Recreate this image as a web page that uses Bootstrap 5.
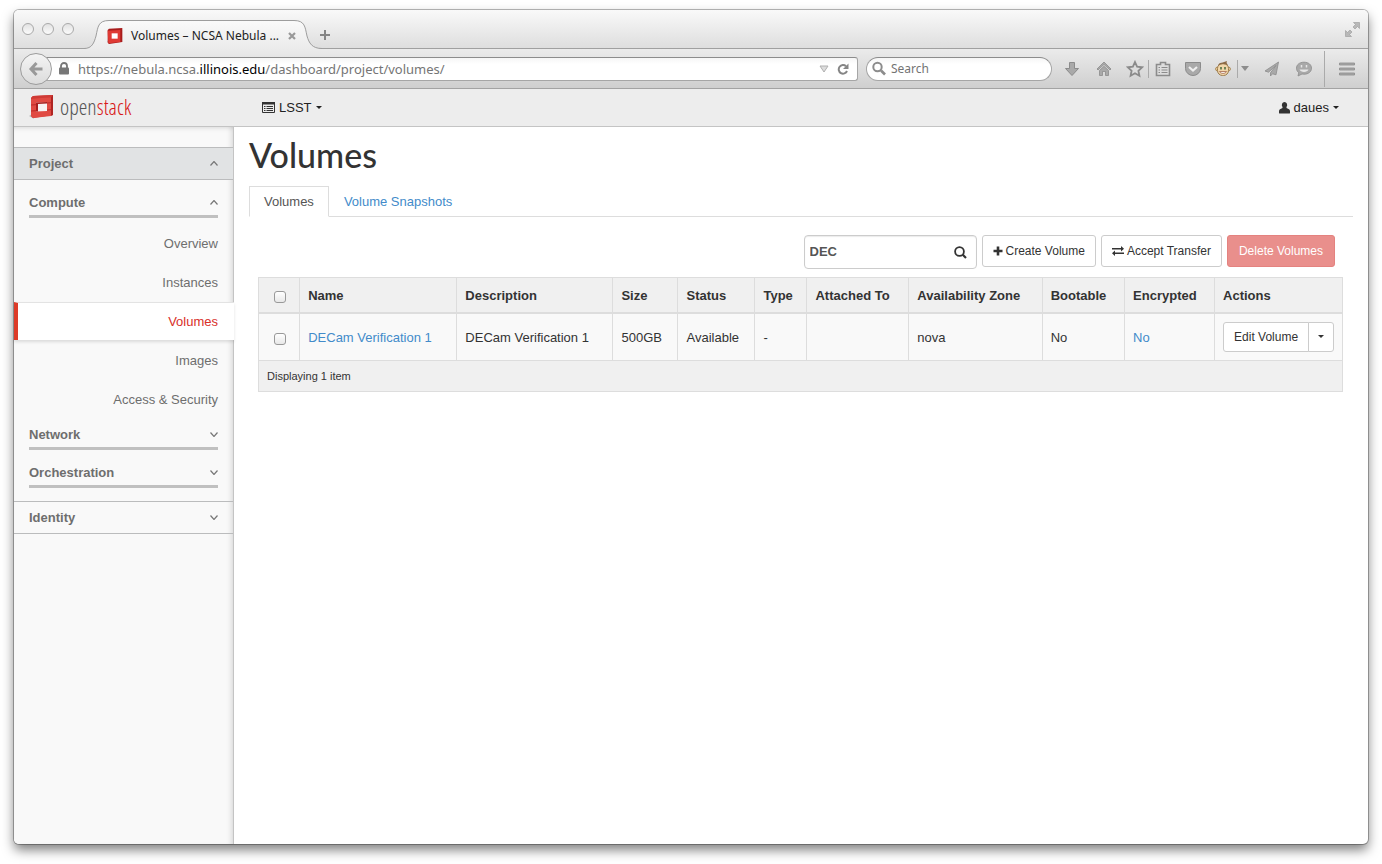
<!DOCTYPE html>
<html lang="en">
<head>
<meta charset="utf-8">
<meta name="viewport" content="width=device-width, initial-scale=1">
<title>Volumes – NCSA Nebula</title>
<link rel="stylesheet" href="https://cdn.jsdelivr.net/npm/bootstrap@5.3.0/dist/css/bootstrap.min.css">
<style>
  body { font-family: "Liberation Sans", Arial, sans-serif; font-size: 13px; line-height: 20px; color: #333; background: #fff; }
  a { text-decoration: none; color: #428bca; }
  button { font-family: inherit; }
  svg { display: block; flex: none; }
  .desk { min-height: 100vh; padding: 10px 14px 20px; overflow: hidden; }
  .win { min-width: 0; border-radius: 5px; box-shadow: 0 0 0 1px rgba(0,0,0,.27), 0 6px 12px rgba(0,0,0,.5); background: #fff; }

  /* browser chrome */
  .chrome { font-family: "Noto Sans", "Open Sans", sans-serif; font-size: 12px; }
  .tabstrip { height: 39px; background: linear-gradient(#f9f9f9, #dedede); border-bottom: 1px solid #a0a0a0; border-radius: 5px 5px 0 0; padding: 0 8px; }
  .lights { gap: 8px; padding-top: 13px; width: 62px; }
  .lights button { width: 12px; height: 12px; border: 1px solid #a9a9a9; border-radius: 50%; background: linear-gradient(#e2e2e2, #fbfbfb); padding: 0; }
  .tab { position: relative; width: 240px; height: 39px; margin-right: -5px; padding: 12px 28px 0 23px; color: #222; }
  .tab > svg { position: absolute; left: 0; top: 0; }
  .tab > .tabrow { position: relative; }
  .plain { border: 0; background: none; padding: 0; color: inherit; }
  .toolbar { height: 40px; background: linear-gradient(#ebebeb, #cfcfcf); border-bottom: 1px solid #a3a3a3; padding: 0 7px 0 6px; }
  .back { width: 32px; height: 32px; border: 1px solid #9c9c9c; border-radius: 50%; background: linear-gradient(#f4f4f4, #dcdcdc); padding: 0; position: relative; z-index: 1; }
  .urlbar { height: 24px; margin-left: -6px; border: 1px solid #a6a6a6; border-top-color: #8c8c8c; border-radius: 0 3px 3px 0; background: linear-gradient(#f6f6f6, #fff 6px); padding: 0 8px 0 11px; color: #757575; font-size: 13px; }
  .urlbar b { font-weight: 400; color: #000; }
  .findbar { width: 186px; height: 24px; margin-left: 8px; border: 1px solid #a6a6a6; border-top-color: #8c8c8c; border-radius: 12px; background: linear-gradient(#f6f6f6, #fff 6px); padding: 0 6px 0 4px; }
  .findbar input { border: 0; outline: 0; background: none; min-width: 0; padding: 0; }
  .findbar input::placeholder { color: #737373; opacity: 1; }
  .tools { color: #8f8f8f; padding-left: 4px; }
  .tools .plain { width: 32px; height: 32px; }
  .tools .slim { width: 28px; }
  .tools .slimmer { width: 24px; }
  .tools .tiny { width: 14px; }
  .rule { width: 1px; height: 18px; background: #aaa; }
  .rule-tall { height: 36px; }
  .tools svg { fill: #a9a9a9; stroke: #8b8b8b; }

  /* site header */
  .topbar { height: 38px; background: #ededed; border-bottom: 1px solid #c4c4c4; padding: 0 29px 0 15px; color: #222; }
  .logo { width: 233px; gap: 6px; padding-bottom: 2px; }
  .wordmark { font-family: "Open Sans Condensed Light", "Liberation Sans Narrow", "Carlito", "Lato", sans-serif; font-size: 22px; line-height: 24px; padding-bottom: 2px; color: #555; }
  .wordmark span { color: #d81818; }
  .topbar .plain { gap: 4px; }
  .caret { width: 0; height: 0; border: 3px solid transparent; border-top: 3px solid; border-bottom: 0; }

  /* sidebar */
  .side { width: 220px; background: #f9f9f9; border-right: 1px solid #c4c4c4; box-shadow: inset -5px 0 5px -3px rgba(0,0,0,.12), inset 0 5px 5px -4px rgba(0,0,0,.12); padding-top: 20px; border-radius: 0 0 0 5px; color: #6e6e6e; flex: none; }
  .panel-head { height: 33px; border-top: 1px solid #bbbcbd; border-bottom: 1px solid #bbbcbd; padding: 0 15px; font-weight: 700; }
  .panel-head.open { background: #e1e3e4; }
  .group-head + .panel-head { margin-top: 13px; }
  .group-head { margin: 7px 15px 0; height: 31px; border-bottom: 3px solid #c0c0c0; padding-top: 3px; font-weight: 700; }
  .group-head, .panel-head { color: #6e6e6e; }
  .side svg { fill: none; stroke: #777; stroke-width: 1.2; }
  .menu { margin-top: 6px; }
  .menu a { display: block; height: 39px; padding: 10px 15px 0 0; text-align: right; color: #6e6e6e; }
  .menu a.current { background: #fff; color: #d9302a; border-left: 4px solid #dd3b28; border-top: 1px solid #e3e3e3; box-shadow: 0 2px 3px rgba(0,0,0,.12); margin-right: -1px; padding: 9px 16px 0 0; height: 38px; margin-bottom: 1px; }

  /* page */
  .page { padding: 9px 15px; min-width: 0; }
  h1 { font-family: "Lato", sans-serif; font-size: 34px; line-height: 38px; color: #333; margin: 0 0 12px; }
  .nav-tabs { border-color: #ddd; }
  .nav-tabs .nav-link { padding: 5px 14px; height: 31px; color: #428bca; border-radius: 0; }
  .nav-tabs .nav-link.active { color: #555; border-color: #ddd #ddd #fff; }
  .actions { gap: 5px; padding: 18px 8px 8px 0; font-size: 12px; }
  .filter { width: 173px; height: 34px; border: 1px solid #ccc; border-radius: 4px; box-shadow: inset 0 1px 1px rgba(0,0,0,.08); padding: 0 9px 0 5px; }
  .filter input { border: 0; outline: 0; padding: 0; min-width: 0; font-size: 13px; font-weight: 700; color: #555; }
  .btn { --bs-btn-font-size: 12px; --bs-btn-border-radius: 3px; --bs-btn-line-height: 18px; --bs-btn-border-color: #ccc; --bs-btn-bg: #fff; --bs-btn-color: #333; --bs-btn-padding-x: 10px; --bs-btn-padding-y: 5px; }
  .actions .btn { height: 32px; gap: 3px; }
  .actions .btn-danger { --bs-btn-padding-x: 11px; --bs-btn-disabled-bg: #e98f8c; --bs-btn-disabled-border-color: #e4827f; --bs-btn-disabled-color: #fff; --bs-btn-disabled-opacity: 1; }
  .grid-wrap { padding: 0 10px 0 9px; }
  .vols { table-layout: fixed; margin: 0; border: 1px solid #ddd; --bs-table-color: #333; color: #333; }
  .vols th, .vols td { border: 1px solid #ddd; padding: 8px; vertical-align: middle; white-space: nowrap; }
  .vols thead th { height: 35px; padding: 8px 8px 5px; background: #f0f0f0; border-bottom: 2px solid #ddd; }
  .vols tbody td { height: 47px; padding-top: 10px; background: #f9f9f9; }
  .vols tbody td:last-child { padding-top: 8px; }
  .vols tfoot td { height: 31px; padding: 5px 8px; background: #f0f0f0; font-size: 11px; }
  .tick { appearance: none; width: 12px; height: 12px; border: 1px solid #999; border-radius: 3px; background: linear-gradient(#fff, #e8e8e8); display: block; margin: 2px 0 0 7px; }
  .vols .btn { height: 30px; }
  .vols .btn + .btn { --bs-btn-padding-x: 9px; }
</style>
</head>
<body>
<div class="desk d-flex">
<div class="win d-flex flex-column flex-grow-1">
  <header class="chrome">
    <div class="tabstrip d-flex">
      <div class="lights d-flex"><button aria-label="Close"></button><button aria-label="Minimize"></button><button aria-label="Zoom"></button></div>
      <div class="tab">
        <svg width="240" height="39" viewBox="0 0 240 39"><defs><linearGradient id="tg" x2="0" y2="1"><stop stop-color="#fafafa"/><stop offset="1" stop-color="#ebebeb"/></linearGradient></defs><path d="M0 38.500C8 38.500 10 33 12 26C14 17 14 10.500 25 10.500H210C221 10.500 221 17 223 26C225 33 228 38.500 238 38.500V39H0Z" fill="url(#tg)"/><path d="M0 38.500C8 38.500 10 33 12 26C14 17 14 10.500 25 10.500H210C221 10.500 221 17 223 26C225 33 228 38.500 238 38.500" fill="none" stroke="#9d9d9d"/></svg>
        <div class="tabrow d-flex align-items-center h-100">
          <svg width="16" height="16" viewBox="0 0 24 24"><path d="m0 20 2-1 2 4Z" fill="#bbb"/><path d="M1 3 3 1 23 0v21L3 24l-2-2Z" fill="#a81c1c"/><path d="M1 4 20 3v18L2 23Z" fill="#df3a34"/><path d="M7 8h9v8H7Z" fill="#fff"/></svg>
          <span class="flex-grow-1 text-nowrap ms-2">Volumes – NCSA Nebula ...</span>
          <button class="plain" aria-label="Close tab"><svg width="8" height="8" viewBox="0 0 8 8"><path d="m1 1 6 6M7 1 1 7" stroke="#999" stroke-width="2.200"/></svg></button>
        </div>
      </div>
      <button class="plain pt-3 pb-1" aria-label="New tab"><svg width="12" height="12" viewBox="0 0 12 12"><path d="M6 1v10M1 6h10" stroke="#858585" stroke-width="2"/></svg></button>
      <button class="plain ms-auto" aria-label="Full screen"><svg width="15" height="15" viewBox="0 0 15 15"><path d="M8.500.5h6v6l-2-2-2.500 2.500L8 5l2.500-2.500ZM6.500 14.500h-6v-6l2 2L5 8l2 2-2.500 2.500Z" fill="#b8b8b8" stroke="#989898" stroke-width=".6"/></svg></button>
    </div>
    <div class="toolbar d-flex align-items-center">
      <button class="back d-flex align-items-center justify-content-center" aria-label="Back"><svg width="16" height="16" viewBox="0 0 16 16"><path d="M8.500 2 3 8l5.500 6M3 8h11.500" fill="none" stroke="#999" stroke-width="3"/></svg></button>
      <div class="urlbar d-flex align-items-center flex-grow-1">
        <svg width="12" height="13" viewBox="0 0 12 13"><path d="M3 6V4a3 3 0 0 1 6 0v2" fill="none" stroke="#777" stroke-width="1.800"/><rect x="1" y="5.500" width="10" height="7" rx="1" fill="#777"/></svg>
        <span class="flex-grow-1 ms-2 text-nowrap">https://nebula.ncsa.<b>illinois.edu</b>/dashboard/project/volumes/</span>
        <svg width="10" height="8" viewBox="0 0 10 8"><path d="M1 1h8L5 7Z" fill="#ddd" stroke="#b0b0b0"/></svg>
        <button class="plain ms-2" aria-label="Reload"><svg width="12" height="12" viewBox="0 0 12 12"><path d="M9 3.200A4.300 4.300 0 1 0 10 8" fill="none" stroke="#858585" stroke-width="2"/><path d="M11.500.5V6H6Z" fill="#858585"/></svg></button>
      </div>
      <div class="findbar d-flex align-items-center">
        <svg width="16" height="16" viewBox="0 0 16 16"><circle cx="6.500" cy="6" r="4.200" fill="none" stroke="#8c8c8c" stroke-width="2"/><path d="m10 9.500 4 4" stroke="#8c8c8c" stroke-width="2.600"/></svg>
        <input class="flex-grow-1 ms-1" type="text" placeholder="Search" aria-label="Search">
      </div>
      <div class="tools d-flex align-items-center">
        <button class="plain d-flex align-items-center justify-content-center" aria-label="Downloads"><svg width="16" height="16" viewBox="0 0 16 16"><path d="M5.500 1.500h5v6h4L8 14.500 1.500 7.500h4Z"/></svg></button>
        <button class="plain d-flex align-items-center justify-content-center" aria-label="Home"><svg width="16" height="16" viewBox="0 0 16 16"><path d="M8 1 1 8l1 1 6-5.500L14 9l1-1Z M3.500 9.500 8 5.300l4.500 4.200v5h-3v-4h-3v4h-3Z" stroke-width=".8"/></svg></button>
        <button class="plain slimmer d-flex align-items-center justify-content-end" aria-label="Bookmark this page"><svg width="18" height="18" viewBox="0 0 18 18"><path d="m9 2 2.100 4.700 5 .6-3.700 3.500 1 5L9 13.200l-4.400 2.600 1-5L1.900 7.300l5-.6Z" style="fill:#ddd;stroke-width:1.800"/></svg></button>
        <span class="rule ms-1"></span>
        <button class="plain slim d-flex align-items-center justify-content-center" aria-label="Bookmarks"><svg width="16" height="16" viewBox="0 0 16 16"><path d="M1.500 3.500h4V1.500h5v2h4v11h-13Z" style="fill:#ddd;stroke-width:1.600"/><path d="M3.500 6.500H5M6.500 6.500h6M3.500 9H5M6.500 9h6M3.500 11.500H5M6.500 11.500h6" stroke-width="1.200"/></svg></button>
        <button class="plain d-flex align-items-center justify-content-center" aria-label="Pocket"><svg width="18" height="16" viewBox="0 0 18 16"><path d="M1.500 1.500h15v6a7.500 7 0 0 1-15 0Z"/><path d="m5 6 4 3.500L13 6" style="fill:none;stroke:#eee;stroke-width:2.200"/></svg></button>
        <button class="plain slim d-flex align-items-center justify-content-center" aria-label="Scripts"><svg width="16" height="17" viewBox="0 0 16 17"><circle cx="2.500" cy="9" r="1.900" style="fill:#f0d4a2;stroke:#a88755"/><circle cx="13.500" cy="9" r="1.900" style="fill:#f0d4a2;stroke:#a88755"/><rect x="2.500" y="3.500" width="11" height="12" rx="5" style="fill:#f1d7aa;stroke:#9b7a4b"/><path d="M3 5.500C4 2 8 3 12 1c-1 2 0 2.500 1 4-3-1-7-1-10 .5Z" style="fill:#8d6b45;stroke:none"/><path d="M6 7v2.500M10 7v2.500" style="stroke:#456b3c;stroke-width:1.500"/><path d="M4.500 11.500h7c-1 2.500-6 2.500-7 0Z" style="fill:#fff;stroke:#a3664a;stroke-width:.8"/></svg></button>
        <span class="rule"></span>
        <button class="plain tiny me-1 d-flex align-items-center justify-content-center" aria-label="Scripts menu"><svg width="8" height="5" viewBox="0 0 8 5"><path d="M0 0h8L4 5Z" style="fill:#8d8d8d;stroke:none"/></svg></button>
        <button class="plain d-flex align-items-center justify-content-center" aria-label="Send"><svg width="16" height="16" viewBox="0 0 16 16"><path d="M14.500 1 1 10l3.500 1.200L12 4.500l-5.500 7.300V15l2-2.200 3.500 1Z" stroke-width=".8"/></svg></button>
        <button class="plain d-flex align-items-center justify-content-center" aria-label="Chat"><svg width="18" height="16" viewBox="0 0 18 16"><path d="M9 1.200c4.500 0 7.500 2.500 7.500 6s-3 6-7.500 6l-2-.2-4 2 .8-3.300C2.300 10.600 1.500 9 1.500 7.200c0-3.500 3-6 7.500-6Z" stroke-width=".8"/><path d="M6.500 4v2.500M11.500 4v2.500" style="stroke:#e6e6e6;stroke-width:1.500"/><path d="M4.500 8.500h9c-1 3.200-8 3.200-9 0Z" style="fill:#e6e6e6;stroke:none"/></svg></button>
        <span class="rule rule-tall ms-1"></span>
        <button class="plain ms-2 slim d-flex align-items-center justify-content-center" aria-label="Menu"><svg width="16" height="14" viewBox="0 0 16 14"><path d="M.5 1h15v2H.5ZM.5 6h15v2H.5ZM.5 11h15v2H.5Z" stroke-width=".8"/></svg></button>
      </div>
    </div>
  </header>

  <nav class="topbar d-flex align-items-center" aria-label="Site">
    <a class="logo d-flex align-items-center" href="#">
      <svg width="25" height="26" viewBox="0 0 25 26"><path d="m0 22 3-2 2 5Z" fill="#bbb"/><path d="m2 4 2-2 20-1v20L4 24l-2-2Z" fill="#c52a27"/><path d="M2 4 4 2l20-1-2 3Z" fill="#cf3b36"/><path d="M2 4.500 22 3.500V22L4 24l-2-2Z" fill="#e04a42"/><path d="M22 3.500 24 1v20l-2 1Z" fill="#b02523"/><path d="M7 8.500 18 8v9L7 17.500Z" fill="#f7f2f2"/><path d="M7 8.500 18 8v1.500L9 10v7.500H7Z" fill="#a81e1c"/><path d="m2 11 5-.3M2 17l5-.3M18 9l4-.3M18 16l4-.3" stroke="#bd2b28"/></svg>
      <span class="wordmark">open<span>stack</span></span>
    </a>
    <button class="plain d-flex align-items-center">
      <svg width="13" height="11" viewBox="0 0 13 11"><path d="M.5.500h12v10H.5Z" fill="none" stroke="#333"/><path d="M0 0h13v2.500H0Z" fill="#333"/><path d="M2 4.500h1.500M4.500 4.500h6.500M2 6.500h1.500M4.500 6.500h6.500M2 8.500h1.500M4.500 8.500h6.500" stroke="#333"/></svg>
      LSST <span class="caret"></span></button>
    <button class="plain d-flex align-items-center ms-auto">
      <svg width="11" height="12" viewBox="0 0 11 12"><path d="M5.500 0a2.700 3 0 0 1 2 5v1L10 7.300q1 .5 1 1.900V11q0 .5-1 .5H1q-1 0-1-.5V9.200q0-1.400 1-1.900L3.500 6V5a2.700 3 0 0 1 2-5Z" fill="#333"/></svg>
      daues <span class="caret"></span></button>
  </nav>

  <div class="d-flex flex-grow-1">
    <aside class="side">
      <a class="panel-head open d-flex align-items-center justify-content-between" href="#">Project <svg width="8" height="5" viewBox="0 0 8 5"><path d="m.5 4.500 3.500-4 3.500 4"/></svg></a>
      <a class="group-head d-flex align-items-center justify-content-between" href="#">Compute <svg width="8" height="5" viewBox="0 0 8 5"><path d="m.5 4.500 3.500-4 3.500 4"/></svg></a>
      <div class="menu">
        <a href="#">Overview</a>
        <a href="#">Instances</a>
        <a href="#" class="current" aria-current="page">Volumes</a>
        <a href="#">Images</a>
        <a href="#">Access &amp; Security</a>
      </div>
      <a class="group-head mt-0 d-flex align-items-center justify-content-between" href="#">Network <svg width="8" height="5" viewBox="0 0 8 5"><path d="m.5.500 3.500 4 3.500-4"/></svg></a>
      <a class="group-head d-flex align-items-center justify-content-between" href="#">Orchestration <svg width="8" height="5" viewBox="0 0 8 5"><path d="m.5.500 3.500 4 3.500-4"/></svg></a>
      <a class="panel-head d-flex align-items-center justify-content-between" href="#">Identity <svg width="8" height="5" viewBox="0 0 8 5"><path d="m.5.500 3.500 4 3.500-4"/></svg></a>
    </aside>

    <main class="page flex-grow-1">
      <h1>Volumes</h1>
      <ul class="nav nav-tabs">
        <li class="nav-item"><a class="nav-link active" href="#" aria-current="page">Volumes</a></li>
        <li class="nav-item"><a class="nav-link" href="#">Volume Snapshots</a></li>
      </ul>
      <div class="grid-wrap">
        <form class="actions d-flex justify-content-end">
          <div class="filter d-flex align-items-center">
            <input class="flex-grow-1" type="text" value="DEC" aria-label="Filter">
            <button class="plain" type="button" aria-label="Filter volumes"><svg width="13" height="13" viewBox="0 0 13 13"><circle cx="5.500" cy="5.500" r="4.400" fill="none" stroke="#333" stroke-width="1.800"/><path d="m8.800 8.800 3.200 3.200" stroke="#333" stroke-width="2.200"/></svg></button>
          </div>
          <button class="btn d-flex align-items-center" type="button"><svg width="10" height="10" viewBox="0 0 10 10"><path d="M5 .5v9M.5 5h9" stroke="#333" stroke-width="2.600"/></svg>Create Volume</button>
          <button class="btn d-flex align-items-center" type="button"><svg width="12" height="10" viewBox="0 0 12 10"><path d="M0 2h9V0l3 2.700-3 2.700V3.500H0ZM12 6.500H3V4.600L0 7.300 3 10V8h9Z" fill="#333"/></svg>Accept Transfer</button>
          <button class="btn btn-danger" type="button" disabled>Delete Volumes</button>
        </form>
        <table class="table vols">
          <colgroup><col style="width:3.8%"><col style="width:14.5%"><col style="width:14.4%"><col style="width:6%"><col style="width:7.1%"><col style="width:4.8%"><col style="width:9.4%"><col style="width:12.3%"><col style="width:7.6%"><col style="width:8.3%"><col style="width:11.8%"></colgroup>
          <thead><tr><th><input class="tick" type="checkbox" aria-label="Select all"></th><th>Name</th><th>Description</th><th>Size</th><th>Status</th><th>Type</th><th>Attached To</th><th>Availability Zone</th><th>Bootable</th><th>Encrypted</th><th>Actions</th></tr></thead>
          <tbody><tr><td><input class="tick" type="checkbox" aria-label="Select DECam Verification 1"></td><td><a href="#">DECam Verification 1</a></td><td>DECam Verification 1</td><td>500GB</td><td>Available</td><td>-</td><td></td><td>nova</td><td>No</td><td><a href="#">No</a></td>
            <td><div class="btn-group"><button class="btn" type="button">Edit Volume</button><button class="btn d-flex align-items-center" type="button" aria-label="More actions"><span class="caret"></span></button></div></td></tr></tbody>
          <tfoot><tr><td colspan="11">Displaying 1 item</td></tr></tfoot>
        </table>
      </div>
    </main>
  </div>
</div>
</div>
<script src="https://cdn.jsdelivr.net/npm/bootstrap@5.3.0/dist/js/bootstrap.bundle.min.js"></script>
</body>
</html>
